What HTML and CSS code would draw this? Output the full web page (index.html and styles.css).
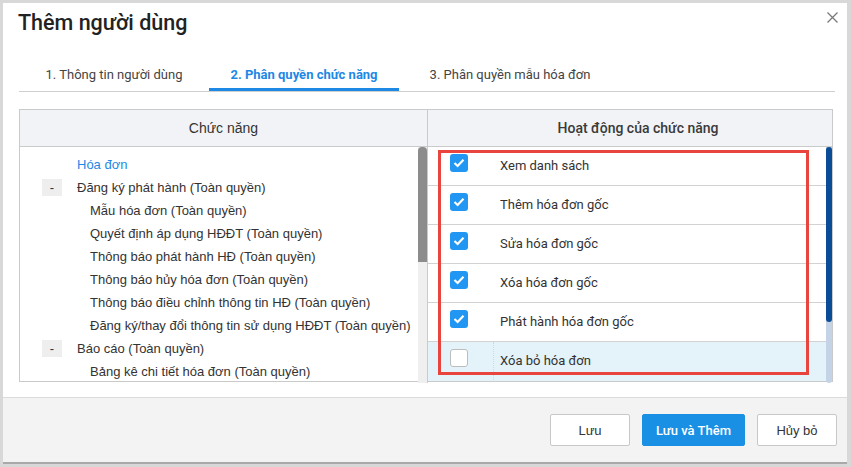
FILE: index.html
```html
<!DOCTYPE html>
<html lang="vi">

<head>
    <meta charset="UTF-8">
    <meta name="viewport" content="width=device-width, initial-scale=1.0">
    <title>Thêm người dùng</title>
    <link rel="stylesheet" href="styles.css">
</head>

<body>
    <div class="dialog">
        <div class="dialog-header">
            <h2 class="dialog-title">Thêm người dùng</h2>
            <span class="close-btn">
                <svg width="11" height="11" viewBox="0 0 11 11"><path d="M0.5 0.5 L10.5 10.5 M10.5 0.5 L0.5 10.5" stroke="#7a7a7a" stroke-width="1.3" fill="none"/></svg>
            </span>
        </div>

        <div class="tabs">
            <div class="tab tab-1">1. Thông tin người dùng</div>
            <div class="tab tab-2 active">2. Phân quyền chức năng</div>
            <div class="tab tab-3">3. Phân quyền mẫu hóa đơn</div>
        </div>

        <div class="perm-table">
            <div class="col-left">
                <div class="col-head head-left">Chức năng</div>
                <div class="col-body">
                    <div class="tree">
                        <div class="tree-row root">Hóa đơn</div>
                        <div class="tree-row parent"><span class="toggle">-</span>Đăng ký phát hành (Toàn quyền)</div>
                        <div class="tree-row leaf">Mẫu hóa đơn (Toàn quyền)</div>
                        <div class="tree-row leaf">Quyết định áp dụng HĐĐT (Toàn quyền)</div>
                        <div class="tree-row leaf">Thông báo phát hành HĐ (Toàn quyền)</div>
                        <div class="tree-row leaf">Thông báo hủy hóa đơn (Toàn quyền)</div>
                        <div class="tree-row leaf">Thông báo điều chỉnh thông tin HĐ (Toàn quyền)</div>
                        <div class="tree-row leaf">Đăng ký/thay đổi thông tin sử dụng HĐĐT (Toàn quyền)</div>
                        <div class="tree-row parent"><span class="toggle">-</span>Báo cáo (Toàn quyền)</div>
                        <div class="tree-row leaf">Bảng kê chi tiết hóa đơn (Toàn quyền)</div>
                    </div>
                    <div class="scroll-track grey"><div class="scroll-thumb grey"></div></div>
                </div>
            </div>

            <div class="col-right">
                <div class="col-head head-right">Hoạt động của chức năng</div>
                <div class="col-body">
                    <div class="actions">
                        <div class="action-row"><span class="cb checked"><svg width="12" height="10" viewBox="0 0 12 10"><path d="M1.5 5 L4.6 8 L10.5 1.8" stroke="#fff" stroke-width="2.2" fill="none"/></svg></span><span class="action-name">Xem danh sách</span></div>
                        <div class="action-row"><span class="cb checked"><svg width="12" height="10" viewBox="0 0 12 10"><path d="M1.5 5 L4.6 8 L10.5 1.8" stroke="#fff" stroke-width="2.2" fill="none"/></svg></span><span class="action-name">Thêm hóa đơn gốc</span></div>
                        <div class="action-row"><span class="cb checked"><svg width="12" height="10" viewBox="0 0 12 10"><path d="M1.5 5 L4.6 8 L10.5 1.8" stroke="#fff" stroke-width="2.2" fill="none"/></svg></span><span class="action-name">Sửa hóa đơn gốc</span></div>
                        <div class="action-row"><span class="cb checked"><svg width="12" height="10" viewBox="0 0 12 10"><path d="M1.5 5 L4.6 8 L10.5 1.8" stroke="#fff" stroke-width="2.2" fill="none"/></svg></span><span class="action-name">Xóa hóa đơn gốc</span></div>
                        <div class="action-row"><span class="cb checked"><svg width="12" height="10" viewBox="0 0 12 10"><path d="M1.5 5 L4.6 8 L10.5 1.8" stroke="#fff" stroke-width="2.2" fill="none"/></svg></span><span class="action-name">Phát hành hóa đơn gốc</span></div>
                        <div class="action-row selected"><span class="cb"></span><span class="action-name">Xóa bỏ hóa đơn</span></div>
                    </div>
                    <div class="scroll-track blue"><div class="scroll-thumb blue"></div></div>
                </div>
                <!-- khung đánh dấu -->
                <div class="highlight-box"></div>
            </div>
        </div>

        <div class="dialog-footer">
            <button class="btn">Lưu</button>
            <button class="btn btn-primary">Lưu và Thêm</button>
            <button class="btn">Hủy bỏ</button>
        </div>
    </div>
</body>

</html>
```

FILE: styles.css
```css
/* Hộp thoại thêm người dùng */
body {
    margin: 0;
    background: #d8d8d8;
    font-family: Roboto, "Liberation Sans", Arial, sans-serif;
    font-size: 13px;
    color: #333;
}
.dialog {
    margin: 3px 0 0 3px;
    width: 844px;
    height: 459px;
    background: #fff;
    border-bottom: 2px solid #a9a9a9;
    display: flex;
    flex-direction: column;
}
.dialog-header {
    position: relative;
    height: 57px;
    padding: 8px 15px 0;
    box-sizing: border-box;
}
.dialog-title {
    margin: 0;
    font-size: 21.5px;
    line-height: 24px;
    font-weight: 500;
    color: #222;
}
.close-btn {
    position: absolute;
    top: 9px;
    right: 9px;
    width: 11px;
    height: 11px;
}
.close-btn svg {
    display: block;
}
.tabs {
    display: flex;
    gap: 4px;
    margin: 0 12px 0 16px;
    padding-left: 4px;
    border-bottom: 1px solid #cfcfcf;
}
.tab {
    height: 28px;
    line-height: 29px;
    text-align: center;
    color: #444;
    border-bottom: 3px solid transparent;
}
.tab-1 { width: 182px; }
.tab-2 { width: 190px; }
.tab-3 { width: 214px; }
.tab.active {
    color: #1e88e5;
    font-weight: 700;
    border-bottom-color: #1e88e5;
}
.perm-table {
    display: grid;
    grid-template-columns: 408px 1fr;
    margin: 17px 0 0 16px;
    width: 814px;
    height: 273px;
    box-sizing: border-box;
    border: 1px solid #cacaca;
}
.col-left {
    border-right: 1px solid #cacaca;
    display: flex;
    flex-direction: column;
}
.col-right {
    position: relative;
    display: flex;
    flex-direction: column;
}
.col-head {
    height: 36px;
    line-height: 36px;
    text-align: center;
    background: #f1f3f7;
    border-bottom: 1px solid #cacaca;
    flex-shrink: 0;
    font-size: 14px;
}
.head-left {
    font-family: "Liberation Sans", Arial, sans-serif;
}
.head-right {
    font-weight: 500;
    padding-left: 16px;
    color: #3a3a3a;
}
.col-body {
    flex: 1;
    display: flex;
    min-height: 0;
}
.tree {
    flex: 1;
    padding-top: 6px;
    font-family: "Liberation Sans", Arial, sans-serif;
    color: #333;
}
.tree-row {
    height: 23px;
    line-height: 23px;
    white-space: nowrap;
    display: flex;
    align-items: center;
}
.tree-row.root {
    padding-left: 57px;
    color: #1e88e5;
}
.tree-row.parent {
    padding-left: 22px;
}
.tree-row.leaf {
    padding-left: 70px;
}
.toggle {
    width: 20px;
    height: 17px;
    line-height: 17px;
    text-align: center;
    background: #eee;
    margin-right: 15px;
}
.scroll-track {
    display: flex;
    flex-direction: column;
}
.scroll-track.grey {
    width: 9px;
    background: #efefef;
}
.scroll-thumb.grey {
    height: 115px;
    background: #8c8c8c;
    border-radius: 4px 4px 0 0;
}
.scroll-track.blue {
    width: 6px;
    background: #c4d4e6;
    border-radius: 0 0 3px 3px;
}
.scroll-thumb.blue {
    height: 175px;
    background: #0b4c97;
    border-radius: 3px;
}
.actions {
    flex: 1;
}
.action-row {
    display: flex;
    align-items: flex-start;
    height: 38px;
    border-bottom: 1px solid #d2d2d2;
}
.action-row.selected {
    height: 39px;
    border-bottom: none;
    background: #e4f2fa;
}
.cb {
    width: 18px;
    height: 18px;
    margin: 7px 32px 0 22px;
    box-sizing: border-box;
    border-radius: 3px;
    border: 1px solid #bdbdbd;
    background: #fff;
    display: flex;
    align-items: center;
    justify-content: center;
}
.cb.checked {
    border: none;
    background: #2196f3;
}
.action-row.selected .cb {
    margin-right: 0;
}
.action-row.selected .action-name {
    border-left: 1px dotted #c8dce8;
    padding-left: 6px;
    margin-left: 25px;
}
.action-name {
    line-height: 38px;
    color: #333;
}
.highlight-box {
    position: absolute;
    left: 10px;
    top: 40px;
    width: 371px;
    height: 225px;
    box-sizing: border-box;
    border: 3px solid #e8453f;
}
.dialog-footer {
    margin-top: 15px;
    flex: 1;
    background: #f3f3f3;
    border-top: 1px solid #dcdcdc;
    display: flex;
    align-items: center;
    justify-content: flex-end;
    gap: 12px;
    padding-right: 10px;
}
.btn {
    height: 32px;
    width: 80px;
    background: #fff;
    border: 1px solid #c8c8c8;
    border-radius: 2px;
    font-family: "Liberation Sans", Arial, sans-serif;
    font-size: 13px;
    color: #333;
    cursor: pointer;
    padding: 0;
}
.btn-primary {
    width: 103px;
    background: #1a90e4;
    border-color: #1a90e4;
    color: #fff;
    font-family: Roboto, sans-serif;
    font-weight: 500;
}
```
